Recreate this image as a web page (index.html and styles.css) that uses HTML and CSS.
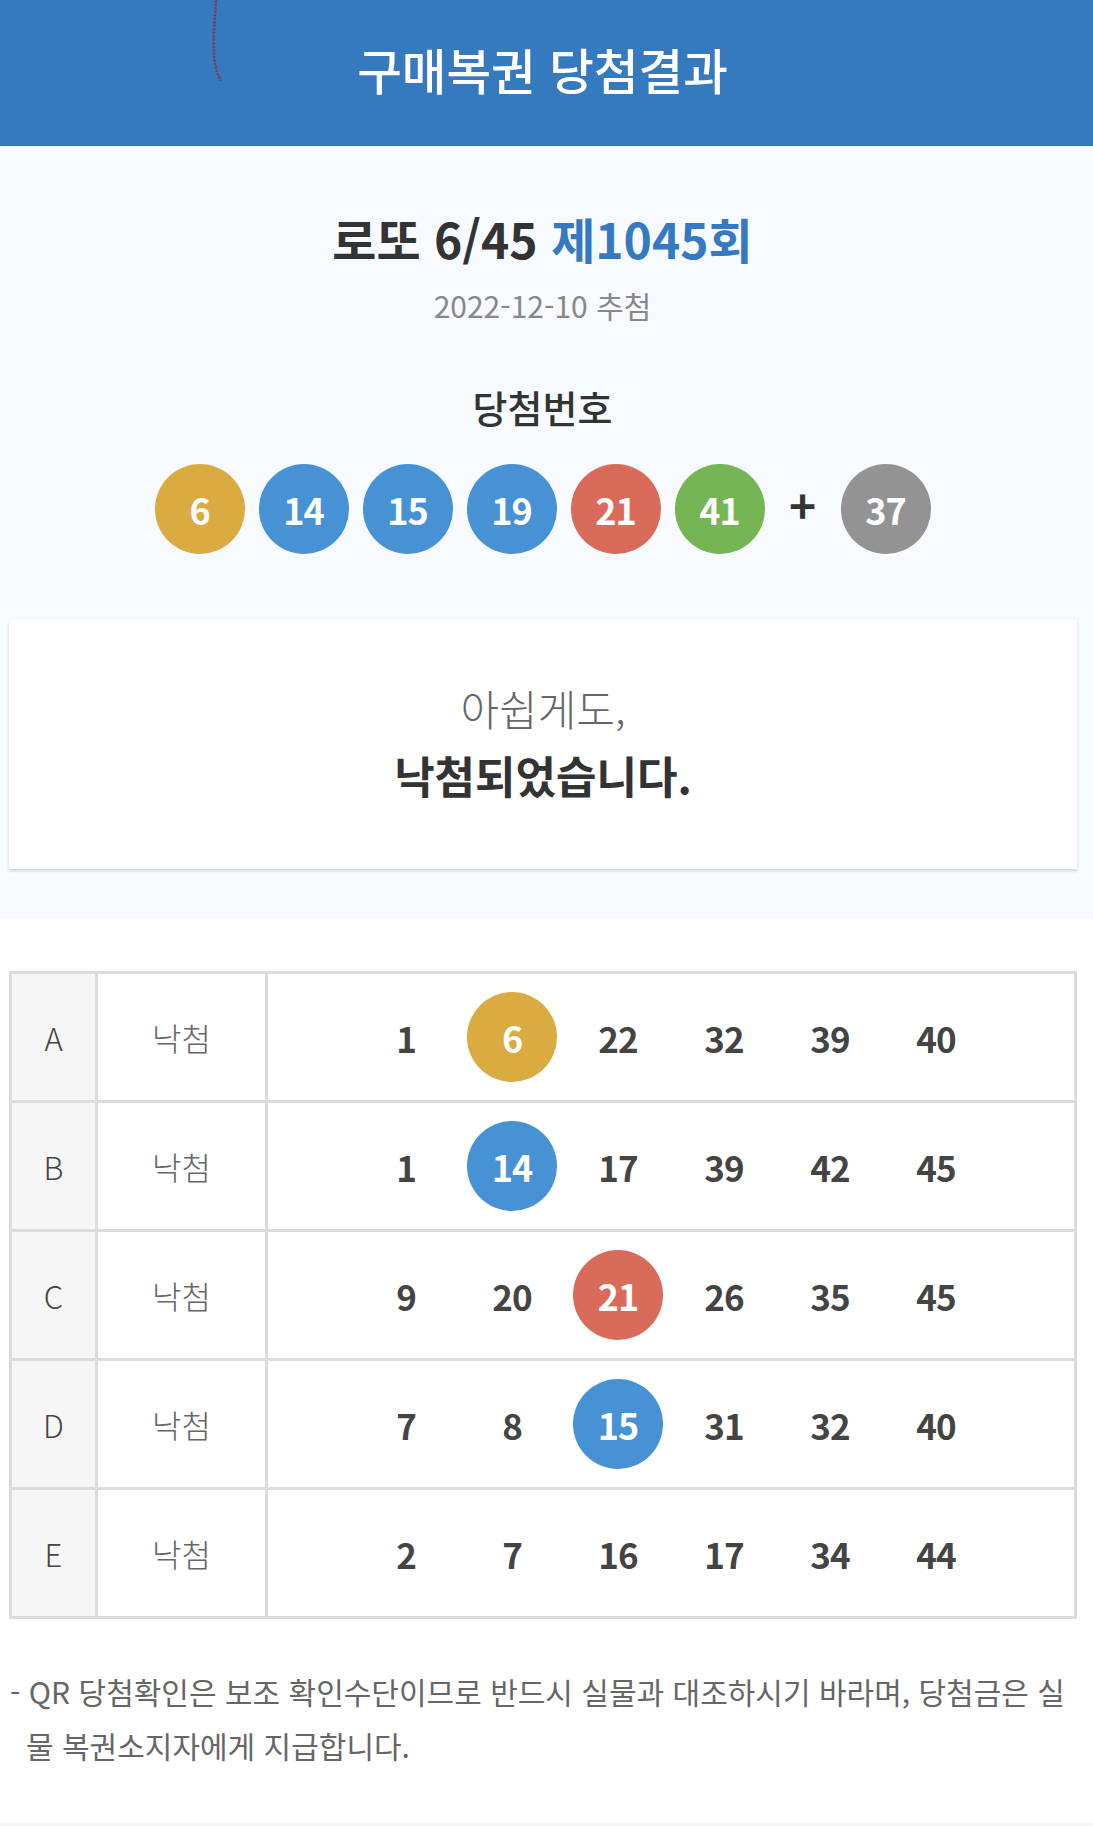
FILE: index.html
```html
<!DOCTYPE html>
<html lang="ko">
<head>
<meta charset="utf-8">
<title>구매복권 당첨결과</title>
<link rel="stylesheet" href="styles.css">
</head>
<body>
<header class="header">
  <svg class="thread" width="20" height="90" viewBox="0 0 20 90"><path d="M9 0 C8 20 6 35 7 50 C7 62 9 72 14 81" fill="none" stroke="#6e4358" stroke-width="2.5" stroke-dasharray="2.5 1"/></svg>
  <div class="inner"><h1 class="title">구매복권 당첨결과</h1></div>
</header>
<section class="summary">
  <div class="inner">
    <h2 class="round">로또 6/45 <span class="num">제1045회</span></h2>
    <p class="date">2022-12-10 추첨</p>
    <h3 class="label">당첨번호</h3>
    <div class="balls">
      <span class="ball c1">6</span>
      <span class="ball c2">14</span>
      <span class="ball c2">15</span>
      <span class="ball c2">19</span>
      <span class="ball c3">21</span>
      <span class="ball c5">41</span>
      <span class="plus">+</span>
      <span class="ball c0">37</span>
    </div>
    <div class="card">
      <p class="sorry">아쉽게도,</p>
      <p class="result">낙첨되었습니다.</p>
    </div>
  </div>
</section>
<section class="games">
  <div class="inner">
    <table class="tbl">
      <tr><td class="game">A</td><td class="rank">낙첨</td><td class="nums"><div class="row"><span class="n">1</span><span class="n"><span class="ball c1">6</span></span><span class="n">22</span><span class="n">32</span><span class="n">39</span><span class="n">40</span></div></td></tr>
      <tr><td class="game">B</td><td class="rank">낙첨</td><td class="nums"><div class="row"><span class="n">1</span><span class="n"><span class="ball c2">14</span></span><span class="n">17</span><span class="n">39</span><span class="n">42</span><span class="n">45</span></div></td></tr>
      <tr><td class="game">C</td><td class="rank">낙첨</td><td class="nums"><div class="row"><span class="n">9</span><span class="n">20</span><span class="n"><span class="ball c3">21</span></span><span class="n">26</span><span class="n">35</span><span class="n">45</span></div></td></tr>
      <tr><td class="game">D</td><td class="rank">낙첨</td><td class="nums"><div class="row"><span class="n">7</span><span class="n">8</span><span class="n"><span class="ball c2">15</span></span><span class="n">31</span><span class="n">32</span><span class="n">40</span></div></td></tr>
      <tr><td class="game">E</td><td class="rank">낙첨</td><td class="nums"><div class="row"><span class="n">2</span><span class="n">7</span><span class="n">16</span><span class="n">17</span><span class="n">34</span><span class="n">44</span></div></td></tr>
    </table>
    <p class="note">- QR 당첨확인은 보조 확인수단이므로 반드시 실물과 대조하시기 바라며, 당첨금은 실물 복권소지자에게 지급합니다.</p>
  </div>
</section>
<footer class="foot"></footer>
</body>
</html>
```
FILE: styles.css
```css
* { box-sizing: border-box; }
html, body { margin: 0; padding: 0; }
body {
  font-family: "Noto Sans CJK KR", "Noto Sans", sans-serif;
  background: #f5f5f5;
  color: #333;
}
.inner { width: 1085px; }
.header {
  position: relative;
  height: 146px;
  background: #3579be;
}
.header .inner {
  height: 146px;
  display: flex;
  align-items: center;
  justify-content: center;
}
.thread { position: absolute; left: 207px; top: 0; }
.title {
  margin: 0;
  color: #fff;
  font-size: 48.5px;
  font-weight: 500;
  letter-spacing: 0;
  line-height: 60px;
  padding-bottom: 8px;
}
.summary {
  background: #f7faff;
  padding: 62px 0 50px;
}
.summary .inner { display: flex; flex-direction: column; align-items: center; }
.round {
  margin: 0;
  font-size: 48px;
  font-weight: 700;
  line-height: 60px;
  letter-spacing: 0;
  color: #333;
}
.round .num { color: #3579c0; }
.date {
  margin: 17px 0 0;
  font-size: 30px;
  line-height: 40px;
  color: #888;
  letter-spacing: 0;
}
.label {
  margin: 60px 0 0;
  font-size: 38px;
  font-weight: 500;
  line-height: 44px;
  color: #333;
  letter-spacing: 0;
}
.balls {
  margin-top: 35px;
  display: flex;
  align-items: center;
  gap: 14px;
}
.ball {
  width: 90px;
  height: 90px;
  border-radius: 50%;
  display: inline-flex;
  align-items: center;
  justify-content: center;
  color: #fff;
  font-size: 36px;
  font-weight: 700;
  letter-spacing: -1px;
  line-height: 1;
}
.c0 { background: #939393; }
.c1 { background: #daab40; }
.c2 { background: #4791d5; }
.c3 { background: #d96b5b; }
.c5 { background: #76b553; }
.plus {
  font-size: 46px;
  font-weight: 700;
  color: #333;
  width: 28px;
  margin: 0 10px;
  text-align: center;
  line-height: 1;
  padding-bottom: 10px;
}
.card {
  align-self: stretch;
  margin: 66px 8px 0 9px;
  background: #fff;
  box-shadow: 0 2px 3px rgba(0, 0, 0, 0.16);
  padding: 62px 0 68px;
  text-align: center;
}
.sorry {
  margin: 0;
  font-size: 42px;
  font-weight: 300;
  line-height: 52px;
  color: #666;
  letter-spacing: 0;
}
.result {
  margin: 15px 0 0;
  font-size: 44px;
  font-weight: 700;
  line-height: 52px;
  color: #333;
  letter-spacing: 0;
}
.games {
  background: #fff;
  padding: 52px 0 51px;
}
.tbl {
  margin: 0 8px 0 9px;
  width: 1068px;
  border-collapse: collapse;
  border: 3px solid #dcdcdc;
}
.tbl td {
  border: 3px solid #dcdcdc;
  height: 129px;
  padding: 0;
  text-align: center;
  vertical-align: middle;
}
.game {
  width: 86px;
  background: #f6f6f6;
  font-size: 31px;
  font-weight: 300;
  color: #444;
}
.rank {
  width: 170px;
  font-size: 32px;
  font-weight: 300;
  color: #666;
  letter-spacing: 0;
}
.row {
  display: flex;
  justify-content: center;
}
.n {
  width: 106px;
  height: 90px;
  display: flex;
  align-items: center;
  justify-content: center;
  font-size: 35px;
  font-weight: 700;
  color: #444;
  letter-spacing: -1px;
}
.note {
  margin: 45px 8px 0 10px;
  padding-left: 16px;
  text-indent: -16px;
  font-size: 30px;
  line-height: 54px;
  color: #666;
  letter-spacing: 0;
}
.foot { height: 20px; background: #f5f5f5; }
```
